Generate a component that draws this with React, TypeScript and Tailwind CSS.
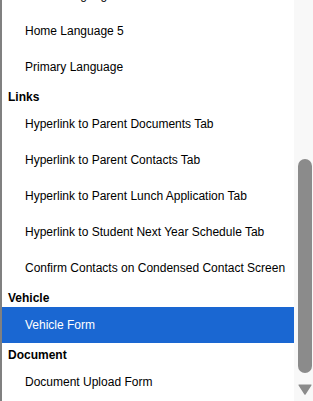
import React from 'react';

type Row = { kind: 'header' | 'item'; label: string; active?: boolean };

const rows: Row[] = [
  { kind: 'item', label: 'Home Language 4' },
  { kind: 'item', label: 'Home Language 5' },
  { kind: 'item', label: 'Primary Language' },
  { kind: 'header', label: 'Links' },
  { kind: 'item', label: 'Hyperlink to Parent Documents Tab' },
  { kind: 'item', label: 'Hyperlink to Parent Contacts Tab' },
  { kind: 'item', label: 'Hyperlink to Parent Lunch Application Tab' },
  { kind: 'item', label: 'Hyperlink to Student Next Year Schedule Tab' },
  { kind: 'item', label: 'Confirm Contacts on Condensed Contact Screen' },
  { kind: 'header', label: 'Vehicle' },
  { kind: 'item', label: 'Vehicle Form', active: true },
  { kind: 'header', label: 'Document' },
  { kind: 'item', label: 'Document Upload Form' },
];

export default function App() {
  return (
    <div
      className="flex w-[313px] h-[401px] overflow-hidden bg-white text-[12px] leading-[14px] text-black"
      style={{ fontFamily: '"Liberation Sans", Arial, sans-serif' }}
    >
      {/* list, scrolled a bit */}
      <div className="w-[294px] h-full overflow-hidden border-l-2 border-[#808080] bg-white">
        <ul className="-mt-[23px]">
          {rows.map((r) =>
            r.kind === 'header' ? (
              <li key={r.label} className="h-[21px] pt-[5px] pl-[6px] font-bold whitespace-nowrap">
                {r.label}
              </li>
            ) : (
              <li
                key={r.label}
                className={
                  r.active
                    ? 'h-9 flex items-center pl-[23px] bg-[#1a67d2] text-white whitespace-nowrap'
                    : 'h-9 flex items-center pl-[23px] whitespace-nowrap'
                }
              >
                {r.label}
              </li>
            )
          )}
        </ul>
      </div>

      {/* scrollbar */}
      <div className="w-[19px] h-full bg-[#f8f8f8] flex flex-col pl-[4px]">
        <div className="mt-[159px] h-[214px] w-[14px] rounded-full bg-[#8b8b8b]" />
        <svg className="mt-[11px]" width="14" height="11" viewBox="0 0 14 11">
          <path d="M1 0.5 H13 Q14 0.5 13.4 1.4 L7.6 10.4 Q7 11 6.4 10.4 L0.6 1.4 Q0 0.5 1 0.5 Z" fill="#8b8b8b" />
        </svg>
      </div>
    </div>
  );
}
